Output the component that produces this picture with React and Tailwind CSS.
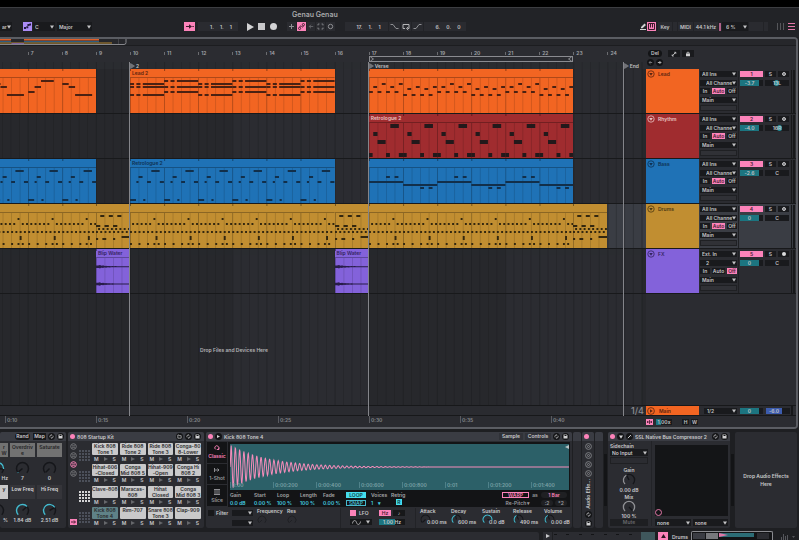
import React from "react";
import clsx from "clsx";

// ---------- arrangement geometry ----------
const BAR = 34.1;
const STEP = BAR / 16;
const barX = (bar) => 130 + (bar - 10) * BAR;

const laneShade = {
  backgroundImage: `repeating-linear-gradient(90deg, #27282c 0 ${BAR * 4}px, #2b2c31 ${BAR * 4}px ${BAR * 8}px)`,
  backgroundPosition: `${barX(9)}px 0`,
};

// notes are [from, to, y] with from/to in sixteenths
const repeat = (pattern, from, count, every = 1) => {
  const out = [];
  for (let i = 0; i < count; i++) {
    pattern.forEach(([a, b, y]) => out.push([a + (from + i * every) * 16, b + (from + i * every) * 16, y]));
  }
  return out;
};

const leadA = [
  [16, 19, 14], [19, 22, 17], [22, 30, 25],
  [32, 35, 22], [35, 38, 17], [38, 44, 11],
  [48, 51, 14], [51, 54, 17], [54, 62, 25],
];
const chord = (rows) => rows.flatMap((y) => [[0, 1.9, y], [3, 4.9, y], [6, 16, y]]);
const leadB = [...repeat(chord([14, 17, 25]), 0, 3, 2), ...repeat(chord([11, 17, 22]), 1, 3, 2)];
const leadC = repeat(
  [
    [0, 1.8, 22], [4, 5.8, 22], [8, 9.8, 22], [12, 13.8, 22], [2, 3.8, 17], [10, 11.8, 17], [6, 7.8, 14], [14, 15.8, 14],
    [16, 17.8, 25], [20, 21.8, 25], [24, 25.8, 25], [28, 29.8, 25], [18, 19.8, 19], [26, 27.8, 19], [22, 23.8, 17], [30, 31.8, 17],
  ],
  0, 3, 2
);
const rhythm = repeat([[0, 1.7, 39], [2, 4, 18], [4, 7.8, 26], [8, 9.8, 39], [10, 14, 10], [14, 16, 39]], 0, 6);
const bassBar = [[0, 2.8, 40], [3, 4, 22], [4, 5.9, 17], [6.2, 7.2, 40], [8, 9.8, 22], [10, 13.9, 11], [14, 15.9, 22]];
const bassC = repeat([[0, 16, 22], [8, 9.8, 17], [12, 13.8, 17], [16, 32, 25], [24, 25.8, 28], [28, 29.8, 28]], 0, 3, 2);

const evens = (y) => [0, 2, 4, 6, 8, 10, 12, 14].map((s) => [s, s + 0.9, y]);
const drumBar = [
  ...[1, 3, 5, 7, 9, 13, 15].map((s) => [s, s + 0.9, 19]),
  ...evens(27),
  ...[0, 4, 8, 11, 13].map((s) => [s, s + 0.9, 39]),
  [11, 11.9, 14], [12, 12.9, 32], [12, 12.9, 34],
];
const drumFill = [
  [2, 3.9, 11], [6, 7.9, 11], [10, 11.9, 11],
  [0, 2, 21], [4, 6, 21], [8, 10, 21],
  ...[1, 3, 5, 7, 9, 11, 13, 15].map((s) => [s, s + 0.9, 24]),
  ...evens(27),
  [12, 16, 32], [0, 1, 34], [3, 4.8, 34], [8, 9, 34],
];

const tracks = [
  {
    name: "Lead", color: "bg-[#f26522]", ink: "text-[#5b2410]", input: "All Ins", channel: "All Channels", monitor: "Auto",
    num: "1", vol: "-3.7", pan: "13L", panAt: 9, note: "#4b2112",
    clips: [
      { from: 5, to: 9, notes: leadA },
      { from: 10, to: 16, name: "Lead 2", notes: leadB },
      { from: 17, to: 23, notes: leadC },
    ],
  },
  {
    name: "Rhythm", color: "bg-[#a02c2f]", ink: "text-[#e9c4c4]", input: "All Ins", channel: "All Channels", monitor: "Auto",
    num: "2", vol: "-4.0", pan: "16R", panAt: 12, note: "#23191b", thick: true,
    clips: [{ from: 17, to: 23, name: "Retrologue 2", notes: rhythm }],
  },
  {
    name: "Bass", color: "bg-[#1f72b6]", ink: "text-[#0e3152]", input: "All Ins", channel: "All Channels", monitor: "Auto",
    num: "3", vol: "-2.6", pan: "C", note: "#122f4a",
    clips: [
      { from: 5, to: 9, notes: repeat(bassBar, 0, 4) },
      { from: 10, to: 16, name: "Retrologue 2", notes: repeat(bassBar, 0, 6) },
      { from: 17, to: 23, notes: bassC },
    ],
  },
  {
    name: "Drums", color: "bg-[#c18e31]", ink: "text-[#4d3912]", input: "All Ins", channel: "All Channels", monitor: "Auto",
    num: "4", vol: "0", pan: "C", note: "#33270f", selected: true,
    clips: [
      { from: 5, to: 9, notes: repeat(drumBar, 0, 4) },
      { from: 9, to: 10, notes: drumFill },
      { from: 10, to: 16, notes: repeat(drumBar, 0, 6) },
      { from: 16, to: 17, notes: drumFill },
      { from: 17, to: 23, notes: repeat(drumBar, 0, 6) },
      { from: 23, to: 24, notes: drumFill },
    ],
  },
  {
    name: "FX", color: "bg-[#8362da]", ink: "text-[#33235f]", input: "Ext. In", channel: "2", monitor: "Off",
    num: "5", vol: "0", pan: "C", note: "#281d49", armed: true,
    clips: [
      { from: 9, to: 10, name: "Blip Water", audio: true },
      { from: 16, to: 17, name: "Blip Water", audio: true },
    ],
  },
];

// ---------- small controls ----------
function Select({ label, value, className, selectClass }) {
  return (
    <span className={clsx("flex h-[6px] items-center overflow-hidden bg-[#191a1d] pr-[1px]", className)}>
      <select
        aria-label={label}
        className={clsx("h-full min-w-0 flex-1 appearance-none truncate border-0 bg-transparent p-0 pl-[2px] leading-[6px] outline-none", selectClass)}
      >
        <option>{value}</option>
      </select>
      <svg viewBox="0 0 4 4" className="h-[4px] w-[4px] shrink-0" fill="#c4c4c6"><path d="M0 .5h4L2 3.8z" /></svg>
    </span>
  );
}

function Field({ label, value, className }) {
  return (
    <input
      aria-label={label}
      defaultValue={value}
      className={clsx("min-w-0 border-0 p-0 text-center leading-[6px] outline-none", className)}
    />
  );
}

function Round({ label, children, className }) {
  return (
    <button aria-label={label} className={clsx("flex h-[7px] w-[7px] shrink-0 items-center justify-center rounded-full bg-[#131416] text-[#d0d0d2]", className)}>
      {children}
    </button>
  );
}

const SwapIcon = () => (
  <svg viewBox="0 0 10 10" className="h-[5px] w-[5px]" fill="none" stroke="currentColor" strokeWidth="1.4">
    <path d="M2.2 6.8A3.3 3.3 0 0 1 5 1.8M7.8 3.2A3.3 3.3 0 0 1 5 8.2M3.6.4 5.2 1.8 3.8 3.4M6.4 9.6 4.8 8.2l1.4-1.6" />
  </svg>
);
const SaveIcon = () => (
  <svg viewBox="0 0 10 10" className="h-[5px] w-[5px]" fill="currentColor">
    <path fillRule="evenodd" d="M1 1h6.5L9 2.5V9H1zM3 2v2.2h4V2z" />
  </svg>
);

function Dot() {
  return <button aria-label="Device activator" className="h-[5px] w-[5px] shrink-0 rounded-full bg-[#fc83ba]" />;
}

// value is 0..1, swept over 270 degrees
function Knob({ value, color = "#45b8cc", ring = "#15161a", className = "h-[14px] w-[14px]" }) {
  const pt = (v, r) => {
    const a = ((135 + v * 270) * Math.PI) / 180;
    return `${(10 + r * Math.cos(a)).toFixed(2)} ${(10 + r * Math.sin(a)).toFixed(2)}`;
  };
  return (
    <svg viewBox="0 0 20 20" className={clsx("shrink-0", className)} fill="none" strokeWidth="2">
      <path d={`M${pt(0, 8)}A8 8 0 1 1 ${pt(1, 8)}`} stroke={ring} />
      {value > 0 && <path d={`M${pt(0, 8)}A8 8 0 ${value > 0.66 ? 1 : 0} 1 ${pt(value, 8)}`} stroke={color} />}
      <path d={`M10 10L${pt(value, 7)}`} stroke={ring} />
    </svg>
  );
}

// ---------- top bar ----------
function ToolButton({ label, active, children, className }) {
  return (
    <button
      aria-label={label}
      className={clsx("flex h-[9px] items-center justify-center", active ? "bg-[#fc83ba] text-[#3a1a2a]" : "bg-[#2a2b30] text-[#8e8f93]", className)}
    >
      {children}
    </button>
  );
}

function TopBar() {
  return (
    <header className="h-[30px] border-t border-[#3c3d41] bg-[#222327]">
      <h1 className="pl-[292px] pt-[2px] text-[7px] leading-[9px] text-[#a9a9ab]">Genau Genau</h1>
      <div className="mt-[3px] flex h-[9px] items-center text-[#c3c3c5]">
        <div className="flex w-[184px] items-center">
          <Select label="Quantization" value="ar" className="h-[9px] w-[12px] bg-[#2a2b30]" selectClass="pl-0 text-clip" />
          <button aria-label="Scale mode" className="ml-[11px] flex h-[9px] w-[9px] items-center justify-center bg-[#ab8cf7] text-[#241b40]">
            <svg viewBox="0 0 9 9" className="h-[9px] w-[9px]" fill="currentColor"><path d="M1 5h2v2H1zM3.3 4.2h2v2h-2zM4.4 2h2v2h-2zM6.4 1.4h1.6v2H6.4z" /></svg>
          </button>
          <Select label="Root note" value="C" className="ml-[1px] h-[9px] w-[22px] bg-[#2a2b30]" />
          <Select label="Scale name" value="Major" className="ml-[2px] h-[9px] w-[35px] bg-[#2a2b30]" />
        </div>

        <div className="flex items-center">
          <ToolButton label="Follow" active className="w-[11px]">
            <svg viewBox="0 0 11 9" className="h-[9px] w-[11px]" fill="currentColor"><path d="M2 4h3V2.3L8 4.5 5 6.7V5H2zM8.4 4h1.4v1H8.4z" /></svg>
          </ToolButton>
          <Field label="Position" value="1.     1.     1" className="ml-[3px] h-[9px] w-[40px] whitespace-pre bg-[#2a2b30] pl-[6px]" />
          <div className="ml-[8px] flex items-center gap-[4px] text-[#d2d2d4]">
            <button aria-label="Play"><svg viewBox="0 0 8 8" className="block h-[8px] w-[8px]" fill="currentColor"><path d="M1 0l7 4-7 4z" /></svg></button>
            <button aria-label="Stop" className="h-[7px] w-[7px] bg-[#c8c8ca]" />
            <button aria-label="Record" className="ml-[1px] h-[7px] w-[7px] rounded-full bg-[#d2d2d4]" />
          </div>
          <div className="ml-[10px] flex items-center gap-px">
            <ToolButton label="Overdub" className="w-[9px]">
              <svg viewBox="0 0 9 9" className="h-[9px] w-[9px]" stroke="currentColor"><path d="M4.5 2v5M2 4.5h5" /></svg>
            </ToolButton>
            <ToolButton label="Automation arm" active className="w-[9px]">
              <svg viewBox="0 0 9 9" className="h-[9px] w-[9px]" fill="none" stroke="currentColor" strokeWidth=".9"><circle cx="2.6" cy="6.4" r="1.1" /><circle cx="6.4" cy="2.6" r="1.1" /><path d="M2.8 5.200C3 3.400 4 3.800 4.600 4.500S6.200 5.600 6.300 3.800" /></svg>
            </ToolButton>
            <ToolButton label="Re-enable automation" className="w-[8px]">
              <svg viewBox="0 0 9 9" className="h-[9px] w-[8px]" fill="none" stroke="#66676b"><path d="M7 4.500H2.500M4.500 2.500l-2 2 2 2" /></svg>
            </ToolButton>
            <ToolButton label="Capture" className="w-[9px]">
              <svg viewBox="0 0 9 9" className="h-[9px] w-[9px]" fill="none" stroke="currentColor" strokeWidth=".8"><path d="M2 3.500V2h1.500M5.500 2H7v1.500M7 5.500V7H5.500M3.500 7H2V5.500" /></svg>
            </ToolButton>
            <ToolButton label="Session record" className="w-[9px]">
              <svg viewBox="0 0 9 9" className="h-[9px] w-[9px]" fill="none" stroke="currentColor"><circle cx="4.5" cy="4.5" r="2.2" /></svg>
            </ToolButton>
          </div>
          <Field label="Loop start" value="17.     1.     1" className="ml-[10px] h-[9px] w-[43px] whitespace-pre bg-[#2a2b30] pl-[4px]" />
          <div className="ml-px flex gap-px">
            <ToolButton label="Punch in" className="w-[11px]">
              <svg viewBox="0 0 11 9" className="h-[9px] w-[11px]" fill="none" stroke="currentColor"><path d="M1.500 2.500H4l3 4h2.500" /></svg>
            </ToolButton>
            <ToolButton label="Loop" className="w-[10px]">
              <svg viewBox="0 0 10 9" className="h-[9px] w-[10px]" fill="none" stroke="#b5b5b7"><path d="M4 6.500H2v-4h6v4H6.500M7.200 5 5.500 6.500l1.700 1.500" /></svg>
            </ToolButton>
            <ToolButton label="Punch out" className="w-[11px]">
              <svg viewBox="0 0 11 9" className="h-[9px] w-[11px]" fill="none" stroke="currentColor"><path d="M1.500 6.500H4l3-4h2.500" /></svg>
            </ToolButton>
          </div>
          <Field label="Loop length" value="6.     0.     0" className="ml-px h-[9px] w-[42px] whitespace-pre bg-[#2a2b30] pl-[6px]" />
        </div>

        <div className="ml-auto flex items-center pr-[4px]">
          <button aria-label="Draw mode" className="flex h-[9px] w-[8px] items-center">
            <svg viewBox="0 0 8 9" className="h-[9px] w-[8px]" fill="#d2d2d4"><path d="M2 5 5.500 1.500 7 3 3.500 6.300H2zM1 7h6v1H1z" /></svg>
          </button>
          <ToolButton label="Computer keyboard" active className="w-[9px]">
            <svg viewBox="0 0 9 9" className="h-[9px] w-[9px]" fill="none" stroke="currentColor"><path d="M1.500 1.500h6v6h-6zM3.500 2v3.500M5.500 2v3.500" /></svg>
          </ToolButton>
          <button className="ml-[2px] h-[9px] w-[14px] bg-[#2a2b30]">Key</button>
          <span className="ml-px h-[9px] w-[4px] bg-[#2a2b30]" />
          <button className="ml-px h-[9px] w-[15px] bg-[#2a2b30]">MIDI</button>
          <span className="ml-px flex h-[9px] w-[24px] items-center justify-center whitespace-nowrap bg-[#2a2b30]">44.1 kHz</span>
          <span className="ml-px h-[8px] w-[2px] bg-[#b0628a]" />
          <Select label="CPU meter" value="6 %" className="ml-px h-[9px] w-[26px] bg-[#2a2b30]" selectClass="pl-[4px]" />
          <span className="ml-px h-[9px] w-[14px] bg-[#2a2b30]" />
          <span className="ml-px h-[9px] w-[4px] bg-[#2a2b30]" />
          <button aria-label="Session view" className="ml-[9px] flex h-[7px] gap-[2px]">
            <i className="h-full w-px bg-[#55565a]" /><i className="h-full w-px bg-[#55565a]" /><i className="h-full w-px bg-[#55565a]" />
          </button>
          <button aria-label="Arrangement view" className="ml-[4px] flex w-[7px] flex-col gap-[2px]">
            <i className="h-px w-full bg-[#e377a8]" /><i className="h-px w-full bg-[#e377a8]" /><i className="h-px w-full bg-[#e377a8]" />
          </button>
        </div>
      </div>
    </header>
  );
}

function Overview() {
  return (
    <div className="h-[7px] border-b border-[#1c1d20] bg-[#26272b]">
      <svg viewBox="0 0 130 6" className="block h-[6px] w-[130px]">
        <path d="M0 0h11v1.500H0zM24 0h75v1.500H24z" fill="#e0602a" />
        <path d="M0 2h11v1.200H0zM24 2h75v1.200H24z" fill="#2c5c80" />
        <path d="M0 3.400h112v1.100H0z" fill="#b58731" />
        <path d="M11.500 4.200H24V6H11.500z" fill="#8766c4" />
        <path d="M118.500 0v6" stroke="#55565b" strokeWidth=".6" />
        <path d="M0 5.500h124q2 0 2-2V0" fill="none" stroke="#85868b" />
      </svg>
    </div>
  );
}

// ---------- arrangement ----------

// beat lines behind the clips, one per quarter bar
function BeatGrid({ className }) {
  return (
    <svg className={clsx("absolute inset-0 h-full w-full", className)}>
      {Array.from({ length: 96 }, (_, i) => (
        <rect key={i} x={barX(6) + (i * BAR) / 4} y="0" width={i % 4 ? 0.6 : 1} height="100%" fill="#1d1e21" />
      ))}
    </svg>
  );
}

function Ruler() {
  const bars = Array.from({ length: 18 }, (_, i) => i + 7);
  return (
    <div className="relative h-[23px] overflow-hidden bg-[#2b2c31] text-[#a2a3a7]">
      {bars.map((n) => (
        <span key={n} style={{ left: barX(n) }} className="absolute top-[6px] border-l border-[#6b6c70] pl-[2px] leading-[3px]">
          {n}
        </span>
      ))}
      <div className="absolute bottom-0 h-[7px] w-full"><BeatGrid className="opacity-50" /></div>
      <div
        className="absolute top-[10px] flex h-[6px] justify-between border border-[#8a8b90] bg-[#2b2c31]"
        style={{ left: barX(17), width: BAR * 6 }}
      >
        <svg viewBox="0 0 4 4" className="h-[4px] w-[4px]" fill="none" stroke="#a2a3a7" strokeWidth=".8"><path d="M.5 0l3 2-3 2" /></svg>
        <svg viewBox="0 0 4 4" className="h-[4px] w-[4px]" fill="none" stroke="#a2a3a7" strokeWidth=".8"><path d="M3.500 0l-3 2 3 2" /></svg>
      </div>
      {[[10, "2"], [17, "Verse"], [24.48, "End"]].map(([at, text]) => (
        <button key={text} style={{ left: barX(at) }} className="absolute bottom-0 flex h-[7px] items-center gap-px text-[#c0c0c2]">
          <svg viewBox="0 0 5 6" className="h-[6px] w-[5px]" fill="#707176" stroke="#8a8b90" strokeWidth=".6"><path d="M.5.5 4.500 3 .5 5.500z" /></svg>
          {text}
        </button>
      ))}
    </div>
  );
}

function AudioShape({ y, color }) {
  const pts = Array.from({ length: 35 }, (_, x) => [x, x < 2 ? 1.2 : 2.1 * Math.exp(-x / 7) * (0.8 + 0.35 * Math.sin(x * 2)) + 0.45]);
  const top = pts.map(([x, a]) => `${x} ${(y - a).toFixed(2)}`).join("L");
  const bottom = pts.slice().reverse().map(([x, a]) => `${x} ${(y + a).toFixed(2)}`).join("L");
  return <path d={`M${top}L${bottom}Z`} fill={color} />;
}

function Clip({ clip, track }) {
  const bars = clip.to - clip.from;
  const width = bars * BAR;
  return (
    <div
      style={{ left: barX(clip.from), width: width }}
      className={clsx("absolute inset-y-0 overflow-hidden", track.color, track.ink)}
    >
      <div className="h-[8px] truncate pl-[2px] leading-[9px]">{clip.name}</div>
      <svg width={width} height="44" className="absolute inset-0">
        <path d={`M0 8.500h${width}`} stroke="#000" strokeOpacity=".28" />
        {Array.from({ length: bars * 4 }, (_, i) => (
          <rect key={i} x={(i * BAR) / 4} y="9" width=".8" height="35" fillOpacity={i % 4 ? 0.16 : 0.3} />
        ))}
        {Array.from({ length: bars }, (_, i) => (
          <rect key={i} x={i * BAR} width="1" height="2" fillOpacity=".4" />
        ))}
        {clip.audio ? (
          <>
            <AudioShape y={17.7} color={track.note} />
            <AudioShape y={35} color={track.note} />
          </>
        ) : (
          clip.notes.map(([a, b, y], i) => (
            <rect key={i} x={a * STEP} y={y} width={(b - a) * STEP} height={track.thick ? 4 : 2} fill={track.note} />
          ))
        )}
      </svg>
    </div>
  );
}

function Canvas() {
  return (
    <div className="relative flex min-w-0 flex-1 flex-col overflow-hidden">
      <Ruler />
      {tracks.map((track) => (
        <div key={track.name} className="h-[45px] border-b border-[#18191b]" style={laneShade}>
          <div className={clsx("relative h-full", track.selected && "bg-[#3a3d44]")}>
            <BeatGrid className="opacity-50" />
            {track.clips.map((clip) => <Clip key={clip.from} clip={clip} track={track} />)}
          </div>
        </div>
      ))}
      <div className="relative flex flex-1 items-center" style={laneShade}>
        <BeatGrid className="opacity-50" />
        <p className="relative w-[468px] text-center text-[#b4b4b6]">Drop Files and Devices Here</p>
      </div>
      <div className="flex h-[11px] items-center justify-end border-y border-[#17181a] bg-[#2a2b30] pr-[2px] text-[9px] font-medium leading-[9px] text-[#8b8c90]">1/4</div>
      <div className="relative h-[11px] bg-[#2a2b30] text-[#85868a]">
        {["0:10", "0:15", "0:20", "0:25", "0:30", "0:35", "0:40"].map((t, i) => (
          <span key={t} style={{ left: 5 + i * 91 }} className="absolute top-0 border-l border-[#5a5b60] pl-px pt-px">{t}</span>
        ))}
      </div>
      {[10, 17, 24.48].map((at) => (
        <i key={at} style={{ left: barX(at) - 1 }} className="pointer-events-none absolute bottom-[11px] top-[16px] w-px bg-[#84858a]" />
      ))}
    </div>
  );
}

function TrackHeader({ track }) {
  return (
    <div className={clsx("flex h-[45px] border-b border-[#18191b]", track.selected ? "bg-[#3a3d44]" : "bg-[#2b2c31]")}>
      <div className={clsx("flex w-[53px] items-start gap-[3px] pl-[1px] pt-[1px]", track.color, track.ink)}>
        <button aria-label={`Fold ${track.name}`}>
          <svg viewBox="0 0 8 8" className="block h-[8px] w-[8px]" fill="none" stroke="currentColor" strokeWidth=".8"><circle cx="4" cy="4" r="3.200" /><path d="M2.200 3h3.600L4 5.800z" fill="currentColor" stroke="none" /></svg>
        </button>
        <span className="leading-[8px]">{track.name}</span>
      </div>
      <div className="ml-px mt-[2px] flex h-[40px] w-[37px] flex-col justify-between">
        <Select label="Input type" value={track.input} />
        <Select label="Input channel" value={track.channel} selectClass="pl-[6px] text-clip" />
        <div className="flex h-[6px] justify-between">
          {["In", "Auto", "Off"].map((m) => (
            <button
              key={m}
              className={clsx("h-[6px] leading-[6px]", m === "Auto" ? "w-[13px]" : "w-[10px]", m === track.monitor ? "bg-[#fc83ba] text-[#4a1c33]" : "bg-[#191a1d]")}
            >
              {m}
            </button>
          ))}
        </div>
        <Select label="Output" value="Main" />
        <div className="h-[6px] border border-[#1f2023] bg-[#303136]" />
      </div>
      <div className="ml-px mt-[2px] flex flex-1 flex-col gap-[3px] border-l border-[#1f2023] pl-px">
        <div className="flex gap-[2px]">
          <button className="h-[6px] w-[23px] bg-[#fc83ba] leading-[6px] text-[#4a1c33]">{track.num}</button>
          <button className="h-[6px] w-[11px] bg-[#191a1d] leading-[6px]">S</button>
          <button aria-label="Arm" className="flex h-[6px] w-[11px] items-center justify-center bg-[#191a1d]">
            <i className={clsx("h-[4px] w-[4px] rounded-full", track.armed ? "bg-[#dcdcde]" : "border border-[#c4c4c6] bg-[#77787c]")} />
          </button>
        </div>
        <div className="flex gap-[2px]">
          <Field label="Volume" value={track.vol} className="h-[6px] w-[23px] border-r-4 border-r-[#191a1d] bg-[#1c7580]" />
          <span className="relative flex h-[6px] w-[24px] bg-[#191a1d]">
            {track.panAt && <i style={{ left: track.panAt }} className="absolute h-full w-[5px] rounded-full bg-[#2492a0]" />}
            <Field label="Pan" value={track.pan} className="relative w-full bg-transparent" />
          </span>
        </div>
      </div>
      <div className="flex w-[5px] gap-px pt-[1px]"><i className="w-[1px] bg-[#17181a]" /><i className="w-[2px] bg-[#17181a]" /></div>
    </div>
  );
}

function HeaderColumn() {
  return (
    <div className="flex w-[150px] shrink-0 flex-col bg-[#2b2c31] text-[#c3c3c5]">
      <div className="h-[23px] pt-[4px]">
        <div className="flex pl-[2px]">
          <button className="h-[7px] w-[14px] rounded-full bg-[#131416] leading-[7px]">Del</button>
          <button aria-label="Automation mode" className="ml-[6px] flex h-[7px] w-[12px] items-center justify-center bg-[#191a1d]">
            <svg viewBox="0 0 6 6" className="h-[6px] w-[6px]" stroke="#d0d0d2" strokeWidth=".9" fill="none"><path d="M1.500 4.700 4.500 1.500M3.300 1.300h1.500v1.500M1.200 3.500V5h1.500" /></svg>
          </button>
          <button aria-label="Lock envelopes" className="ml-[2px] flex h-[7px] w-[12px] items-center justify-center bg-[#191a1d]">
            <svg viewBox="0 0 6 6" className="h-[6px] w-[6px]" fill="#d0d0d2"><path d="M1 2.600h4v2.700H1z" /><path d="M2 2.800V1.300h2v1.500" fill="none" stroke="#d0d0d2" strokeWidth=".7" /></svg>
          </button>
        </div>
        <div className="mt-[2px] flex gap-[2px] pl-[1px]">
          <Round label="Previous locator"><svg viewBox="0 0 6 6" className="h-[5px] w-[5px]" stroke="#85868a" fill="none"><path d="M5 3H1.500M3 1.300 1.300 3 3 4.700" /></svg></Round>
          <Round label="Next locator"><svg viewBox="0 0 6 6" className="h-[5px] w-[5px]" stroke="#d0d0d2" fill="none"><path d="M1 3h3.500M3 1.300 4.700 3 3 4.700" /></svg></Round>
        </div>
      </div>
      {tracks.map((track) => <TrackHeader key={track.name} track={track} />)}
      <div className="flex-1" />
      <div className="flex h-[11px] items-center border-y border-[#17181a]">
        <div className="flex h-full w-[53px] items-center gap-[4px] bg-[#f26522] pl-px text-[#5b2410]">
          <svg viewBox="0 0 8 8" className="h-[8px] w-[8px]" fill="none" stroke="currentColor" strokeWidth=".8"><circle cx="4" cy="4" r="3.400" /><path d="M3 2.300v3.400L5.800 4z" fill="currentColor" stroke="none" /></svg>
          Main
        </div>
        <Select label="Cue out" value="1/2" className="ml-[5px] w-[33px]" selectClass="pl-[3px]" />
        <Field label="Main volume" value="0" className="ml-[3px] h-[6px] w-[23px] border-r-4 border-r-[#191a1d] bg-[#1c7580]" />
        <Field label="Cue volume" value="-6.0" className="ml-[3px] h-[6px] w-[24px] border-r-8 border-r-[#191a1d] bg-[#3c5cae]" />
        <i className="ml-[1px] h-full w-[2px] bg-[#17181a]" />
      </div>
      <div className="flex h-[11px] items-center">
        <button aria-label="Track height" className="flex h-[6px] w-[7px] items-center justify-center bg-[#fc83ba]">
          <svg viewBox="0 0 7 6" className="h-[6px] w-[7px]" stroke="#4a1c33" fill="none" strokeWidth=".8"><path d="M1 3h5M3.500 1v4M1 3l1-1M1 3l1 1M6 3 5 2M6 3 5 4" /></svg>
        </button>
        <Field label="Scrub speed" value="1.00x" className="ml-[3px] h-[6px] w-[16px] bg-linear-to-r from-[#1c7580] from-30% to-[#191a1d] to-30%" />
        <button className="ml-[10px] h-[6px] w-[7px] bg-[#191a1d] leading-[6px]">H</button>
        <button className="ml-[2px] h-[6px] w-[7px] bg-[#191a1d] leading-[6px]">W</button>
      </div>
    </div>
  );
}

// ---------- devices ----------
function Device({ className, head, children }) {
  return (
    <section className={clsx("flex shrink-0 flex-col overflow-hidden rounded-[2px] bg-[#2b2c31]", className)}>
      <div className="flex h-[9px] shrink-0 items-center gap-[2px] bg-[#3a3c43] px-[2px]">{head}</div>
      {children}
    </section>
  );
}

const macros = [
  [["r|W", "Hz", 0.85, "gray"], ["Overdriv|e", "7", 0.02, "gray"], ["Saturate", "0", 0, "gray"]],
  [["y", "%", 0, "light"], ["Low Freq", "1.84 dB", 0.68, "dark"], ["Hi Freq", "2.51 dB", 0.72, "dark"]],
];
const macroTone = {
  gray: "bg-[#727272] text-[#222224]",
  light: "bg-[#c9c9ca] text-[#222224]",
  dark: "bg-[#35353a] text-[#dadadc]",
};

function MacroRack() {
  return (
    <Device
      className="w-[66px]"
      head={
        <>
          <button className="ml-auto h-[7px] w-[15px] rounded-full bg-[#17181a] leading-[7px]">Rand</button>
          <button className="ml-px h-[7px] w-[13px] bg-[#17181a] leading-[7px]">Map</button>
          <Round label="Hot-swap"><SwapIcon /></Round>
          <Round label="Save"><SaveIcon /></Round>
        </>
      }
    >
      {macros.map((row, r) => (
        <div key={r} className="flex h-[42px] gap-[2px] pt-[2px]">
          {row.map(([name, value, amount, tone], c) => (
            <div key={name} className={clsx("flex shrink-0 flex-col", c ? "w-[25px] items-center" : "w-[8px] items-end")}>
              <div className={clsx("h-[14px] w-full pt-px text-center", macroTone[tone])}>
                {name.split("|").map((line) => <div key={line}>{line}</div>)}
              </div>
              <Knob value={amount} className={clsx("mt-[4px] h-[15px] w-[15px]", !c && "mr-[3px]")} />
              <span className="-mt-[1px]">{value}</span>
            </div>
          ))}
        </div>
      ))}
    </Device>
  );
}

const pads = [
  ["Kick 808|Tone 1", "Ride 808|Tone 2", "Ride 808|Tone 3", "Conga-80|8-Lower"],
  ["Hihat-606|-Closed", "Conga|Mid 808 5", "Hihat-909|-Open", "Conga Hi|808 2"],
  ["Clave-808", "Maracas-|808", "Hihat|Closed", "Conga|Mid 808 3"],
  ["Kick 808|Tone 4", "Rim-707", "Snare 808|Tone 3", "Clap-909"],
];

function PadMap({ on }) {
  return (
    <span className={clsx("grid h-[11px] w-[11px] grid-cols-4 gap-px", on ? "text-[#d4d4d5]" : "text-[#4c505a]")}>
      {Array.from({ length: 16 }, (_, i) => <i key={i} className="bg-current" />)}
    </span>
  );
}

function DrumRack() {
  return (
    <Device
      className="ml-[2px] w-[136px]"
      head={
        <>
          <Dot />
          <h2 className="mr-auto">808 Startup Kit</h2>
          <Round label="Fold"><svg viewBox="0 0 6 6" className="h-[5px] w-[5px]" fill="none" stroke="currentColor" strokeWidth=".8"><path d="M1 5V1.200h1.500l.5.800H5V5z" /></svg></Round>
          <Round label="Hot-swap"><SwapIcon /></Round>
          <Round label="Save" className="mr-px"><SaveIcon /></Round>
        </>
      }
    >
      <div className="flex flex-1 pl-[2px] pt-[2px]">
        <div className="flex w-[7px] flex-col items-center gap-[2px] pb-[3px]">
          {["#77787c", "#77787c", "#fc83ba", "#77787c"].map((c, i) => (
            <svg key={i} viewBox="0 0 7 7" className="h-[7px] w-[7px]" fill="none" stroke={c}><circle cx="3.500" cy="3.500" r="2.800" /><path d="M2 2.800h3M2 4.300h3" strokeWidth=".8" /></svg>
          ))}
          <svg viewBox="0 0 7 6" className="mt-auto h-[6px] w-[7px]"><path d="M0 0h7v6H0z" fill="#fc83ba" /><path d="M1 3h4M4 1.500 5.500 3 4 4.500" stroke="#4a1c33" fill="none" /></svg>
        </div>
        <div className="ml-[2px] flex w-[11px] flex-col justify-around pt-[2px]">
          <PadMap /><PadMap /><PadMap on /><PadMap />
        </div>
        <div className="ml-[2px] grid flex-1 grid-cols-4 gap-x-[2px] pr-[3px]">
          {pads.flat().map((name, i) => (
            <div key={name} className="h-[21px] min-w-0">
              <div className={clsx("h-[12px] rounded-[1px] text-center text-[#2a2a2c]", i === 12 ? "bg-[#5f8287]" : "bg-[#c9c9ca]")}>
                {name.split("|").map((line) => <div key={line} className="whitespace-nowrap">{line}</div>)}
              </div>
              <div className="flex h-[8px] items-center justify-between px-[2px]">
                <button>M</button>
                <button aria-label="Preview"><svg viewBox="0 0 4 4" className="block h-[4px] w-[4px]" fill="#66676b"><path d="M0 0l4 2-4 2z" /></svg></button>
                <button>S</button>
              </div>
            </div>
          ))}
        </div>
      </div>
    </Device>
  );
}

const wavePath = (() => {
  const pts = [];
  for (let x = 0; x <= 340; x += 0.4) {
    const amp = 22 * Math.exp(-x / 38) * (x < 1 ? x : 1);
    pts.push(`${x.toFixed(1)} ${(22.5 - amp * Math.sin((x * 2 * Math.PI) / 4.3)).toFixed(2)}`);
  }
  return `M${pts.join("L")}`;
})();

function ModeTab({ label, active, children }) {
  return (
    <button className={clsx("flex flex-1 flex-col items-center justify-center gap-[2px] border-b border-r border-[#2b2c31]", active ? "text-[#fc83ba]" : "text-[#98999d]")}>
      <svg viewBox="0 0 8 6" className="h-[6px] w-[8px]" fill="none" stroke="currentColor" strokeWidth=".9">{children}</svg>
      {label}
    </button>
  );
}

function Param({ label, value, className }) {
  return (
    <div className={clsx("shrink-0", className)}>
      <div className="text-[#a5a5a8]">{label}</div>
      <div className="mt-[2px] text-[#45cfe0]">{value}</div>
    </div>
  );
}

const envelope = [["Attack", "0.00 ms", 0], ["Decay", "600 ms", 0.45], ["Sustain", "0.0 dB", 0.9], ["Release", "490 ms", 0.4], ["Volume", "0.00 dB", 0.42]];

function Simpler() {
  return (
    <Device
      className="ml-[2px] w-[366px]"
      head={
        <>
          <Dot />
          <Round label="Preview"><svg viewBox="0 0 4 4" className="h-[3px] w-[3px]" fill="currentColor"><path d="M0 0l4 2-4 2z" /></svg></Round>
          <h2 className="mr-auto">Kick 808 Tone 4</h2>
          <button className="h-[7px] w-[24px] bg-[#303238] leading-[7px]">Sample</button>
          <button className="h-[7px] w-[26px] bg-[#303238] leading-[7px]">Controls</button>
          <Round label="Hot-swap"><SwapIcon /></Round>
          <Round label="Save" className="mr-px"><SaveIcon /></Round>
        </>
      }
    >
      <div className="ml-px mr-[2px] mt-px flex h-[65px] bg-[#131416]">
        <div className="flex w-[21px] flex-col">
          <ModeTab label="Classic" active><path d="M2.500 4.300A2 2 0 1 1 5.500 3.800M3.800 4.500h2.200V2.600" /></ModeTab>
          <ModeTab label="1-Shot"><path d="M1.500 1v4M2 3h4M4.500 1.500 6 3 4.500 4.500" /></ModeTab>
          <ModeTab label="Slice"><path d="M2 .5v5M4 .5v5M6 .5v5M1 .5h6M1 5.500h6" /></ModeTab>
        </div>
        <div className="flex min-w-0 flex-1 flex-col pl-[2px] pr-px pt-[2px]">
          <div className="relative h-[46px] bg-[#2c6068]">
            <svg viewBox="0 0 340 45" preserveAspectRatio="none" className="absolute inset-0 h-full w-full" fill="none">
              <path d={wavePath} stroke="#f58cba" />
              <path d="M340 1v4l-4-2z" fill="#b9c4c6" />
            </svg>
            <div className="absolute bottom-[2px] flex text-[#7ba0a5]">
              {["0:00", "0:00:200", "0:00:400", "0:00:600", "0:00:800", "0:01", "0:01:200", "0:01:400"].map((t) => (
                <span key={t} className="w-[43px] shrink-0 border-l border-[#4f8189] pl-px last:w-[30px]">{t}</span>
              ))}
            </div>
          </div>
          <div className="mt-[2px] flex items-start">
            <Param label="Gain" value="0.0 dB" className="w-[24px]" />
            <Param label="Start" value="0.00 %" className="w-[23px]" />
            <Param label="Loop" value="100 %" className="w-[23px]" />
            <Param label="Length" value="100 %" className="w-[23px]" />
            <Param label="Fade" value="0.00 %" className="w-[23px]" />
            <div className="flex w-[25px] flex-col gap-[2px]">
              <button className="h-[6px] w-[20px] bg-[#45dced] leading-[6px] text-[#0d3a40]">LOOP</button>
              <button className="h-[6px] w-[20px] border border-[#45b8cc] leading-[4px] text-[#45b8cc]">SNAP</button>
            </div>
            <Param label="Voices" value="1    ▾" className="w-[20px] whitespace-pre" />
            <div className="text-[#a5a5a8]">
              Retrig
              <button className="ml-[5px] mt-px block h-[6px] w-[6px] bg-[#45dced] leading-[6px] text-[#0d3a40]">R</button>
            </div>
            <div className="ml-auto flex flex-col gap-[2px] pr-[2px] text-[#98999d]">
              <div className="flex items-center justify-end">
                <button className="h-[6px] w-[27px] border border-[#fc83ba] leading-[4px] text-[#fc83ba]">WARP</button>
                <span className="w-[12px] text-center">as</span>
                <button className="h-[6px] w-[26px] rounded-full bg-[#1f2023] leading-[6px] text-[#fc83ba]">1 Bar</button>
              </div>
              <div className="flex items-center justify-end">
                <button className="mr-[9px] w-[28px] whitespace-nowrap">Re-Pitch ▾</button>
                <button className="h-[6px] w-[12px] rounded-full bg-[#1f2023] leading-[6px]">:2</button>
                <button className="ml-[2px] h-[6px] w-[12px] rounded-full bg-[#1f2023] leading-[6px]">*2</button>
              </div>
            </div>
          </div>
        </div>
      </div>
      <div className="flex flex-1 pt-px">
        <label className="ml-[2px] flex h-[8px] w-[24px] items-center gap-[2px] pt-[2px]">
          <input type="checkbox" className="h-[6px] w-[6px] appearance-none bg-[#17181a]" />
          Filter
        </label>
        <div className="flex w-[21px] flex-col gap-[4px] pt-[2px]">
          <Select label="Filter type" value="" />
          <Select label="Filter circuit" value="" />
        </div>
        <div className="ml-[4px] w-[28px]">Frequency<Knob value={0} ring="#202125" className="mt-px h-[10px] w-[10px]" /></div>
        <div className="ml-[2px] w-[53px]">Res<Knob value={0} ring="#202125" className="mt-px h-[10px] w-[10px]" /></div>
        <div className="flex w-[76px] flex-col gap-[3px] border-x border-[#222327] pl-[9px] pt-[2px]">
          <div className="flex items-center">
            <label className="flex w-[29px] items-center gap-[3px]">
              <input type="checkbox" defaultChecked className="h-[6px] w-[6px] appearance-none bg-[#fc83ba]" />
              LFO
            </label>
            <button className="h-[6px] w-[12px] bg-[#fc83ba] leading-[6px] text-[#4a1c33]">Hz</button>
            <button className="ml-[2px] h-[6px] w-[12px] bg-[#17181a] leading-[6px]">♪</button>
          </div>
          <div className="flex items-center">
            <span className="flex h-[6px] w-[22px] items-center justify-between bg-[#17181a] px-[2px]">
              <svg viewBox="0 0 9 5" className="h-[5px] w-[9px]" fill="none" stroke="#c4c4c6" strokeWidth=".8"><path d="M.5 3.500C1-.5 4 0 4.500 2.500S8 5.500 8.500 1.500" /></svg>
              <svg viewBox="0 0 4 4" className="h-[4px] w-[4px]" fill="#c4c4c6"><path d="M0 .5h4L2 3.800z" /></svg>
            </span>
            <Field label="LFO rate" value="1.00 Hz" className="ml-[7px] h-[6px] w-[26px] bg-linear-to-r from-[#1c7580] from-60% to-[#17181a] to-60%" />
          </div>
        </div>
        <div className="flex flex-1 justify-between pl-[4px]">
          {envelope.map(([name, value, amount]) => (
            <div key={name} className="w-[28px]">
              {name}
              <div className="flex items-end whitespace-nowrap">
                <Knob value={amount} className="h-[11px] w-[11px]" />
                <span className="-ml-[4px]">{value}</span>
              </div>
            </div>
          ))}
        </div>
      </div>
    </Device>
  );
}

function Compressor() {
  return (
    <Device
      className="w-[122px]"
      head={
        <>
          <Dot />
          <Round label="Unfold"><svg viewBox="0 0 4 4" className="h-[4px] w-[4px]" fill="currentColor"><path d="M0 .5h4L2 3.800z" /></svg></Round>
          <Round label="Plug-in edit"><svg viewBox="0 0 6 6" className="h-[5px] w-[5px]" stroke="currentColor" strokeWidth="1.200"><path d="M1 5l3-3M3.500 1.200 5 2.700" /></svg></Round>
          <h2 className="mr-auto whitespace-nowrap">SSL Native Bus Compressor 2</h2>
          <Round label="Hot-swap"><SwapIcon /></Round>
          <Round label="Save"><SaveIcon /></Round>
        </>
      }
    >
      <div className="flex flex-1 pb-[3px]">
        <div className="ml-[2px] flex w-[38px] flex-col items-center pt-[2px]">
          <span className="self-start">Sidechain</span>
          <Select label="Sidechain input" value="No Input" className="h-[7px] w-full" />
          <div className="mt-px h-[7px] w-full border border-[#1f2023]" />
          <span className="mt-[3px]">Gain</span>
          <Knob value={0.4} color="#8f9094" className="h-[14px] w-[14px]" />
          <span>0.00 dB</span>
          <span className="mt-px">Mix</span>
          <Knob value={1} color="#8f9094" className="h-[14px] w-[14px]" />
          <span className="-mt-px">100 %</span>
          <button className="mt-auto h-[7px] w-full bg-[#1e1f22] leading-[7px] text-[#66676b]">Mute</button>
        </div>
        <div className="ml-[3px] flex flex-1 flex-col border-l border-[#222327] pl-[3px] pr-[2px] pt-[4px]">
          <div className="flex flex-1 items-end bg-[#141517]">
            <span className="h-[7px] w-[7px] rounded-full border border-[#e377a8]" />
          </div>
          <div className="mt-[3px] flex gap-[2px]">
            <Select label="X axis" value="none" className="h-[7px] flex-1" />
            <Select label="Y axis" value="none" className="h-[7px] flex-1" />
          </div>
        </div>
      </div>
    </Device>
  );
}

function DeviceChain() {
  return (
    <div className="mt-[3px] flex h-[96px] text-[#c9c9cb]">
      <MacroRack />
      <DrumRack />
      <Simpler />
      <Device className="ml-px w-[8px]" />
      <Device className="ml-px w-[12px]" head={<Dot />}>
        <div className="flex flex-1 flex-col items-center gap-[2px] pb-[2px] pt-[2px]">
          {[0, 1, 2, 3].map((i) => (
            <svg key={i} viewBox="0 0 7 7" className="h-[7px] w-[7px]" fill="none" stroke="#85868a" strokeWidth=".9"><circle cx="3.500" cy="3.500" r="2.900" /><circle cx="3.500" cy="3.500" r="1" /></svg>
          ))}
          <h2 className="flex-1 rotate-180 whitespace-nowrap [writing-mode:vertical-rl]">Audio Effe...</h2>
          <Round label="Hot-swap"><SwapIcon /></Round>
          <Round label="Save"><SaveIcon /></Round>
        </div>
      </Device>
      <Device className="ml-px w-[8px]" />
      <span className="mx-px my-[22px] w-[3px] bg-[#131416]" />
      <Compressor />
      <span className="mx-px my-[22px] w-[3px] bg-[#131416]" />
      <div className="mr-[2px] flex flex-1 items-center justify-center rounded-[2px] bg-[#2b2c31] pb-px text-center leading-[8px]">
        <p>Drop Audio Effects<br />Here</p>
      </div>
    </div>
  );
}

function StatusBar() {
  return (
    <footer className="flex h-[12px] items-end text-[#c9c9cb]">
      <div className="h-[8px] min-w-0 flex-1 rounded-tr-[2px] bg-[#2b2c31]" />
      <button aria-label="Preview clip" className="ml-[4px] flex h-[8px] w-[9px] items-center justify-center bg-[#2b2c31]">
        <svg viewBox="0 0 4 4" className="h-[4px] w-[4px]" fill="currentColor"><path d="M0 0l4 2-4 2z" /></svg>
      </button>
      <div className="ml-px flex h-[8px] w-[102px] items-start justify-between bg-[#2b2c31] pl-px">
        {[0, 1, 2, 3, 4, 5, 6].map((i) => <i key={i} className="mt-[2px] h-px w-[3px] bg-[#131416]" />)}
        <i className="h-full w-[14px] bg-[#3f575c]" />
      </div>
      <button aria-label="Show device view" className="ml-[3px] flex h-[8px] w-[10px] items-center justify-center bg-[#fc83ba]">
        <svg viewBox="0 0 6 5" className="h-[4px] w-[5px]" fill="#2a1420"><path d="M3 0l3 5H0z" /></svg>
      </button>
      <span className="ml-[4px] w-[19px] leading-[6px]">Drums</span>
      <div className="flex h-[9px] w-[82px] items-center gap-px overflow-hidden rounded-t-[2px] border border-b-0 border-[#8a8b90] bg-[#131416] px-px">
        <i className="h-[6px] w-[12px] bg-[#3a3c43]" />
        <i className="h-[6px] w-[12px] bg-[#77787c]" />
        <svg viewBox="0 0 35 6" className="h-[6px] w-[35px]"><path d="M0 0h35v4H0z" fill="#2c6d76" /><path d="M0 0l9 2-9 2z" fill="#e377a8" /></svg>
        <i className="ml-[2px] h-[6px] w-[12px] bg-[#2b2c31]" />
      </div>
      <svg viewBox="0 0 18 8" className="ml-[6px] mr-[2px] h-[8px] w-[18px]" stroke="#55565b" fill="#55565b"><path d="M2.500 8V5M4.500 8V2M6.500 8V4M8.500 8V3" fill="none" /><path d="M13 4h3l-1.500 2z" stroke="none" /></svg>
    </footer>
  );
}

export default function App() {
  return (
    <div className="flex min-h-screen w-full cursor-default flex-col overflow-hidden bg-[#1e1f22] font-['Inter','Liberation_Sans',sans-serif] text-[5px] font-semibold leading-[6px]">
      <div className="h-[7px] bg-black" />
      <TopBar />
      <main className="mr-[1px] flex flex-1 flex-col overflow-hidden rounded-r-[4px] border-y-2 border-r-2 border-[#5b5d63]">
        <Overview />
        <div className="flex flex-1">
          <Canvas />
          <HeaderColumn />
        </div>
      </main>
      <DeviceChain />
      <StatusBar />
    </div>
  );
}
